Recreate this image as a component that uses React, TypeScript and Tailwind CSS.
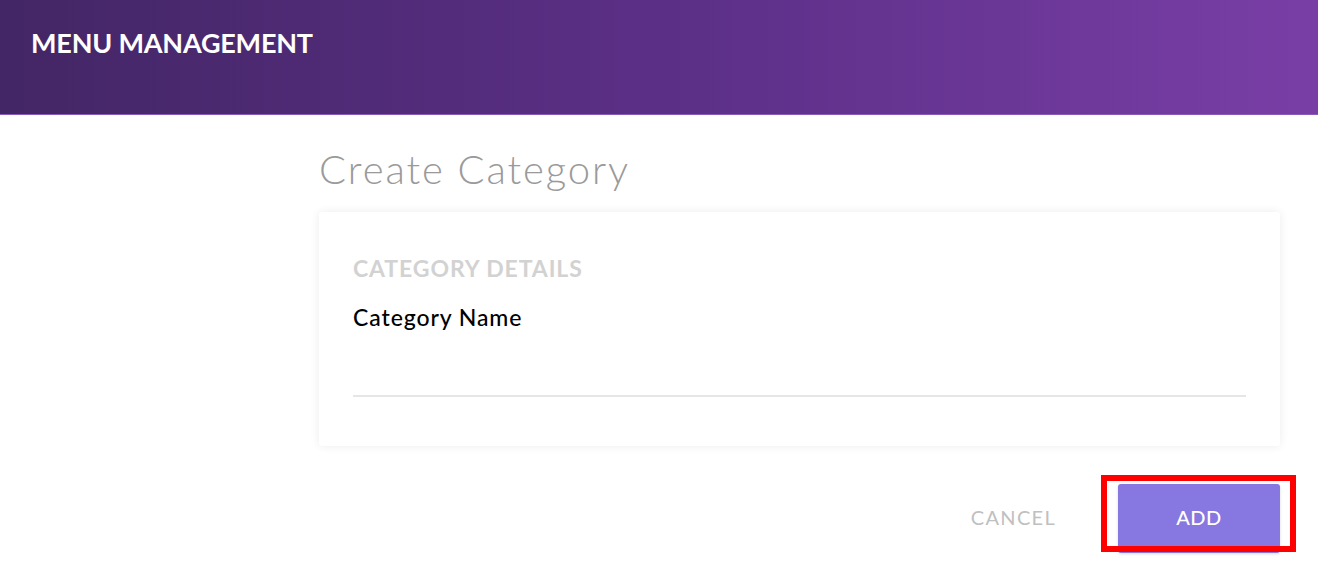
export default function App() {
  return (
    <div className="min-h-[565px] w-[1318px] bg-white font-['Lato',sans-serif] overflow-hidden">
      <header className="h-[115px] bg-gradient-to-r from-[#432665] via-[#5b2f86] to-[#793ea6] border-b border-[#8a5ab8] flex items-start">
        <h1 className="mt-[27px] ml-[31px] text-[27px] font-bold text-white tracking-[-0.2px] leading-[32px]">
          MENU MANAGEMENT
        </h1>
      </header>

      <main className="pl-[319px] pr-[38px]">
        <h2 className="mt-[30px] text-[40px] font-light text-[#9a9a9a] leading-[48px] tracking-[1.9px]">
          Create Category
        </h2>

        <section className="mt-[19px] h-[234px] bg-white rounded-[3px] shadow-[0_0_10px_rgba(0,0,0,0.08)] px-[34px] pt-[43px]">
          <div className="text-[23px] font-bold text-[#d2d2d2] leading-[26px] tracking-[0.9px]">
            CATEGORY DETAILS
          </div>
          <label className="block mt-[23px] text-[23px] font-medium text-black leading-[26px] tracking-[0.9px]">
            Category Name
          </label>
          <div className="mt-[65px] h-[2px] bg-[#e6e6e6]" />
        </section>

        <div className="mt-[38px] flex justify-end items-center">
          <button className="mr-[62px] mb-[3px] text-[20px] text-[#c0c0c0] tracking-[1.3px]">
            CANCEL
          </button>
          <div className="relative">
            <button className="w-[162px] h-[69px] pb-[3px] rounded-[3px] bg-[#8777e0] text-white text-[20px] font-medium tracking-[0.5px] shadow-[0_1px_3px_rgba(0,0,0,0.15)]">
              ADD
            </button>
            <div className="absolute left-[-17px] top-[-9px] w-[195px] h-[77px] border-[6px] border-[#ff0000] pointer-events-none" />
          </div>
        </div>
      </main>
    </div>
  );
}
